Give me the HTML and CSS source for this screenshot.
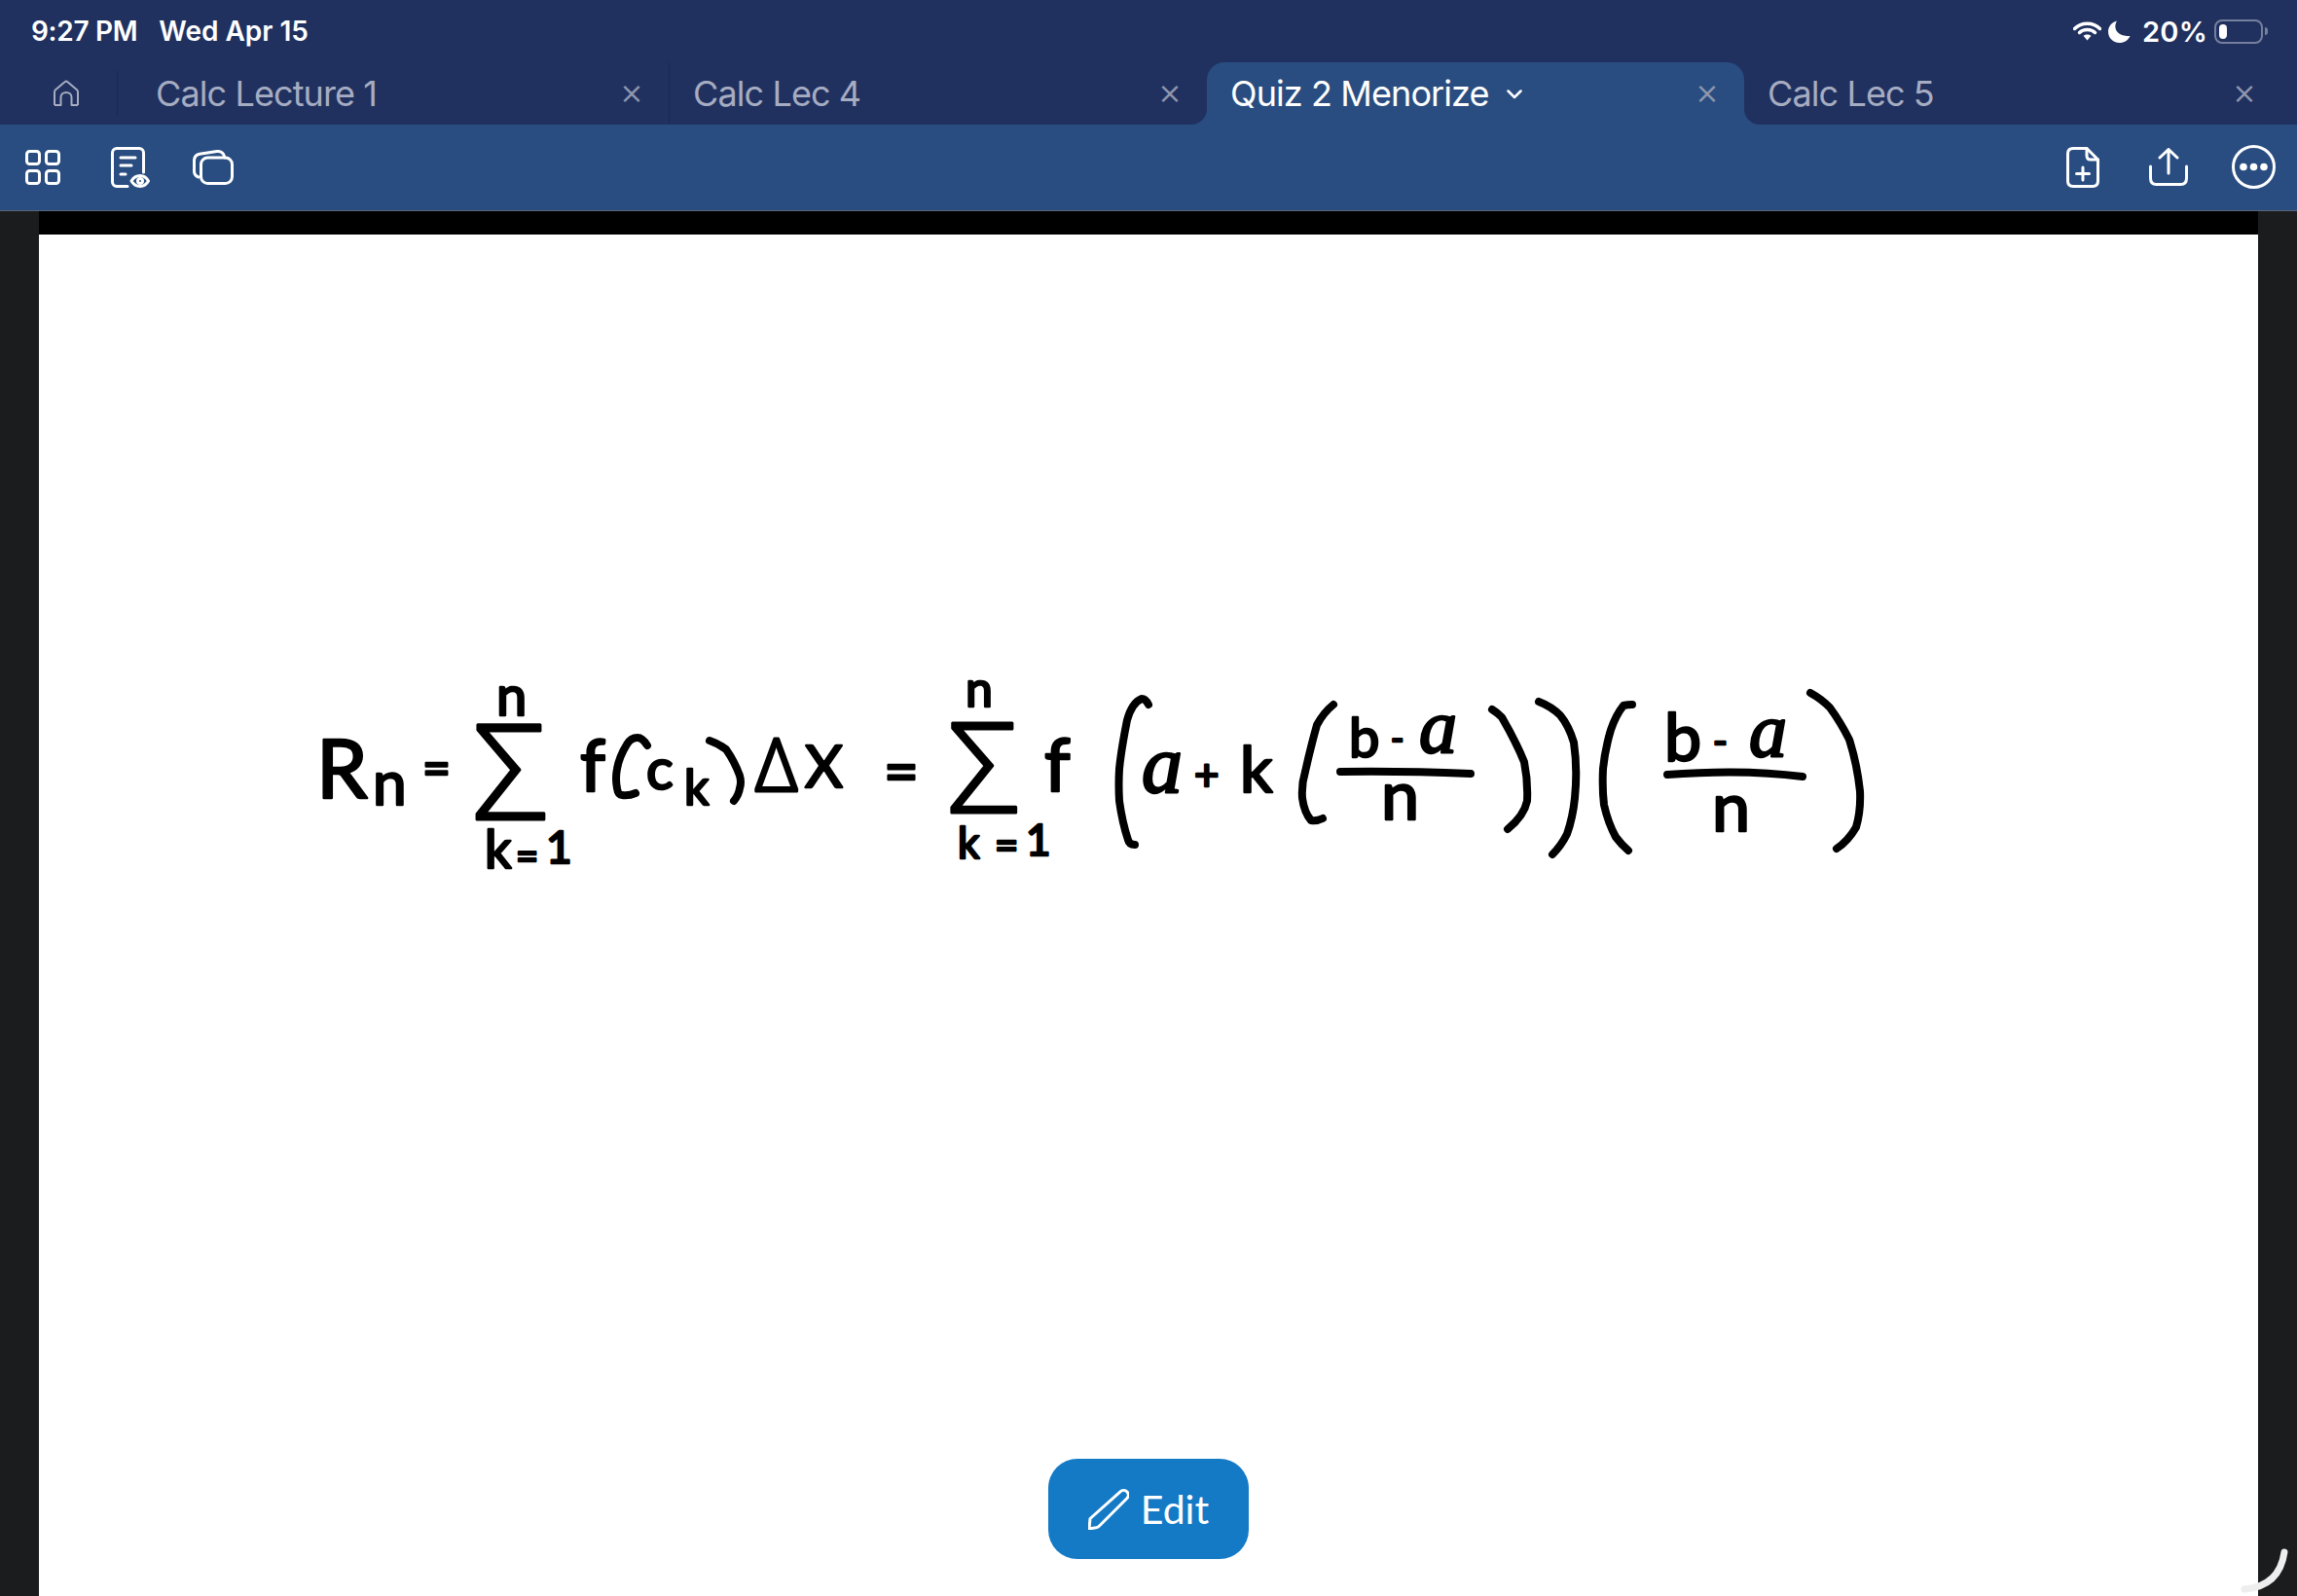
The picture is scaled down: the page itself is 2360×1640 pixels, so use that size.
FILE: index.html
```html
<!DOCTYPE html>
<html lang="en">
<head>
  <meta charset="UTF-8" />
  <meta name="viewport" content="width=device-width, initial-scale=1.0"/>
  <title>Quiz 2 Menorize</title>
  <link rel="stylesheet" href="styles.css">
</head>
<body>
  <div class="status-bar">
    <div class="status-left">
      <span class="status-time">9:27 PM</span>
      <span>Wed Apr 15</span>
    </div>
    <div class="status-right">
      <svg class="wifi" viewBox="0 0 29 20" width="29" height="20">
        <path d="M1.5 7.5C8.5 .5 20.5 .5 27.5 7.5" />
        <path d="M6.5 11.5C10.500 7.500 18.500 7.500 22.500 11.500" />
        <path class="wifi-dot" d="M10.500 14.800C12.800 12.900 16.200 12.900 18.500 14.800L14.500 19.500Z" />
      </svg>
      <svg class="moon" viewBox="0 0 23 23" width="23" height="23">
        <path d="M9 .5C5 7 8 16.500 22.500 16C20.500 20.500 16.500 23 11.500 23C5 23 0 17.800 0 11.500C0 6.500 3.500 1.800 9 .5Z" />
      </svg>
      <span class="battery-text">20%</span>
      <div class="battery"><div class="battery-fill"></div></div>
      <div class="battery-nub"></div>
    </div>
  </div>

  <div class="tabs">
    <div class="tab-home">
      <svg viewBox="0 0 28 28" width="28" height="28" class="icon-muted">
        <path d="M2 26V12.500C2 11.500 2.400 10.800 3 10.200L12.500 2.200C13.400 1.400 14.600 1.400 15.500 2.200L25 10.200C25.600 10.800 26 11.500 26 12.500V26" />
        <path d="M2 26H8.500V18C8.500 15 11 13 14 13C17 13 19.500 15 19.500 18V26H26" />
      </svg>
    </div>
    <div class="tab">
      <span class="tab-title">Calc Lecture 1</span>
      <span class="tab-close">×</span>
    </div>
    <div class="tab">
      <span class="tab-title">Calc Lec 4</span>
      <span class="tab-close">×</span>
    </div>
    <div class="tab active">
      <span class="tab-title">Quiz 2 Menorize</span>
      <svg class="chevron" viewBox="0 0 16 10" width="16" height="10"><path d="M1.500 1.500L8 8L14.500 1.500" /></svg>
      <span class="tab-close">×</span>
    </div>
    <div class="tab">
      <span class="tab-title">Calc Lec 5</span>
      <span class="tab-close">×</span>
    </div>
  </div>

  <div class="toolbar">
    <div class="toolbar-group">
      <svg class="icon" viewBox="0 0 36 36" width="36" height="36">
        <rect x="1.500" y="1.500" width="13" height="13" rx="3" />
        <rect x="21.500" y="1.500" width="13" height="13" rx="3" />
        <rect x="1.500" y="21.500" width="13" height="13" rx="3" />
        <rect x="21.500" y="21.500" width="13" height="13" rx="3" />
      </svg>
      <svg class="icon" viewBox="0 0 40 42" width="40" height="42">
        <path d="M17 40.500H6C3.500 40.500 1.500 38.500 1.500 36V6C1.500 3.500 3.500 1.500 6 1.500H29C31.500 1.500 33.500 3.500 33.500 6V26" />
        <path d="M10 11H25M10 19H21M10 28H15" />
        <path d="M21 35C23 31.500 26 29.500 30 29.500C34 29.500 36.500 31.500 38.500 35C36.500 38.500 34 40.500 30 40.500C26 40.500 23 38.500 21 35Z" />
        <circle cx="30" cy="35" r="2.500" />
      </svg>
      <svg class="icon" viewBox="0 0 42 36" width="42" height="36">
        <rect x="8.500" y="8" width="32" height="26.500" rx="7" />
        <path d="M6 28C3 27 1.800 25 1.500 22.500L1.500 11C1.500 7.500 3.500 5 7 4.200L25 1.500C29 1.200 32 3.500 33 8" />
      </svg>
    </div>
    <div class="toolbar-group toolbar-right">
      <svg class="icon" viewBox="0 0 34 42" width="34" height="42">
        <path d="M21 1.500H7C3.500 1.500 1.500 3.500 1.500 7V35C1.500 38.500 3.500 40.500 7 40.500H27C30.500 40.500 32.500 38.500 32.500 35V13Z" />
        <path d="M21 1.500V9C21 11.500 22.500 13 25 13H32.500" />
        <path d="M17 21V34M10.500 27.500H23.500" />
      </svg>
      <svg class="icon" viewBox="0 0 40 39" width="40" height="39">
        <path d="M20 26V2M11 10L20 1.500L29 10" />
        <path d="M1.500 19V31C1.500 35 3.500 37.500 7.500 37.500H32.500C36.500 37.500 38.500 35 38.500 31V19" />
      </svg>
      <svg class="icon" viewBox="0 0 45 45" width="45" height="45">
        <circle cx="22.500" cy="22.500" r="21" />
        <circle class="icon-dot" cx="12" cy="22.500" r="3.800" />
        <circle class="icon-dot" cx="22.500" cy="22.500" r="3.800" />
        <circle class="icon-dot" cx="33" cy="22.500" r="3.800" />
      </svg>
    </div>
  </div>

  <div class="viewer">
    <div class="sheet">
      <div class="sheet-top"></div>
      <div class="page">
        <svg class="ink" viewBox="40 241 2280 1399" width="2280" height="1399">
          <text class="hand" x="325" y="820" font-size="84">R</text>
          <text class="hand" x="383" y="827" font-size="62">n</text>
          <text class="hand" x="434" y="807" font-size="50">=</text>
          <text class="hand" x="510" y="735" font-size="56">n</text>
          <text class="hand sym" x="486" y="842" font-size="136">Σ</text>
          <text class="hand" x="498" y="892" font-size="54">k</text>
          <text class="hand" x="530" y="894" font-size="40">=</text>
          <text class="hand" x="561" y="887" font-size="46">1</text>
          <text class="hand" x="596" y="813" font-size="74">f</text>
          <text class="hand" x="664" y="811" font-size="58">c</text>
          <text class="hand" x="703" y="827" font-size="50">k</text>
          <text class="hand sym" x="776" y="813" font-size="76">Δ</text>
          <text class="hand" x="827" y="809" font-size="60">X</text>
          <text class="hand" x="908" y="815" font-size="62">=</text>

          <text class="hand" x="992" y="726" font-size="50">n</text>
          <text class="hand sym" x="974" y="835" font-size="130">Σ</text>
          <text class="hand" x="984" y="882" font-size="44">k</text>
          <text class="hand" x="1022" y="883" font-size="42">=</text>
          <text class="hand" x="1054" y="879" font-size="44">1</text>
          <text class="hand" x="1073" y="813" font-size="76">f</text>
          <text class="hand curl" x="1173" y="814" font-size="84">a</text>
          <text class="hand" x="1227" y="812" font-size="44">+</text>
          <text class="hand" x="1274" y="814" font-size="66">k</text>
          <text class="hand" x="1386" y="778" font-size="56">b</text>
          <text class="hand" x="1429" y="772" font-size="36">-</text>
          <text class="hand curl" x="1458" y="773" font-size="78">a</text>
          <text class="hand" x="1419" y="842" font-size="70">n</text>

          <text class="hand" x="1710" y="782" font-size="68">b</text>
          <text class="hand" x="1760" y="776" font-size="40">-</text>
          <text class="hand curl" x="1797" y="777" font-size="78">a</text>
          <text class="hand" x="1759" y="854" font-size="70">n</text>

          <path class="stroke" d="M665 766Q660 758 655 758Q648 758 644 765Q636 778 634 790Q632 800 634 810Q635 817 639 817Q646 818 653 815" />
          <path class="stroke" d="M729 761Q738 764 746 770Q755 783 760 797Q762 804 760 810Q759 817 754 823" />
          <path class="stroke" d="M1180 724Q1177 718 1173 718Q1163 722 1158 740Q1152 770 1150 790Q1149 806 1150 823Q1153 845 1159 863Q1160 868 1166 868" />
          <path class="stroke" d="M1370 724Q1360 732 1353 745Q1346 770 1341 793Q1337 806 1338 820Q1340 835 1347 843Q1353 844 1359 841" />
          <path class="stroke" d="M1533 729Q1538 732 1543 737Q1558 763 1566 783Q1570 803 1569 823Q1566 838 1549 852" />
          <path class="stroke" d="M1581 721Q1594 726 1603 735Q1612 746 1617 763Q1621 790 1618 820Q1616 840 1610 857Q1604 869 1595 878" />
          <path class="stroke" d="M1677 724Q1672 724 1668 725Q1660 735 1655 750Q1649 770 1647 790Q1646 810 1648 827Q1652 845 1660 860Q1666 868 1673 874" />
          <path class="stroke" d="M1860 712Q1871 718 1880 727Q1891 742 1900 760Q1908 785 1911 813Q1912 833 1907 850Q1899 864 1887 872" />
          <path class="stroke" d="M1377 793Q1440 792 1511 795" />
          <path class="stroke" d="M1713 796Q1790 790 1852 798" />
        </svg>
        <button class="edit-btn">
          <svg viewBox="0 0 42 42" width="42" height="42"><path d="M1 41L2 30.500L33 2.800C35 1 38 1 40 3C41.800 5 41.800 7.500 40 9.500L11.500 38C10.500 39 9.500 39.500 8 39.800Z" /></svg>
          <span>Edit</span>
        </button>
      </div>
    </div>
    <svg class="scroll-arc" viewBox="0 0 60 60" width="60" height="60"><path d="M6 53Q42 50 47 15" /></svg>
  </div>
</body>
</html>
```

FILE: styles.css
```css
:root {
  --status-bg: #20315f;
  --toolbar-bg: #294d80;
  --muted: #a6acc1;
  --gutter: #1b1c1e;
}

* {
  margin: 0;
  padding: 0;
  box-sizing: border-box;
}

html, body {
  width: 2360px;
  height: 1640px;
  overflow: hidden;
}

body {
  font-family: Inter, 'Liberation Sans', sans-serif;
  background: var(--gutter);
  display: flex;
  flex-direction: column;
}

svg {
  display: block;
  flex-shrink: 0;
}

/* status bar */
.status-bar {
  height: 64px;
  padding: 0 30px 0 32px;
  background: var(--status-bg);
  color: #fff;
  font-size: 28px;
  font-weight: 600;
  display: flex;
  align-items: center;
  justify-content: space-between;
}

.status-left {
  display: flex;
  gap: 22px;
}

.status-time {
  letter-spacing: -0.3px;
}

.status-right {
  display: flex;
  align-items: center;
}

.wifi {
  fill: none;
  stroke: #fff;
  stroke-width: 3.5;
  stroke-linecap: round;
}

.wifi-dot {
  fill: #fff;
  stroke: none;
}

.moon {
  fill: #fff;
  margin-left: 7px;
}

.battery-text {
  margin-left: 12px;
  font-size: 29px;
  letter-spacing: 0.2px;
}

.battery {
  width: 50px;
  height: 25px;
  margin-left: 7px;
  padding: 3px;
  border: 2px solid #76809c;
  border-radius: 8px;
}

.battery-fill {
  width: 8px;
  height: 15px;
  background: #fff;
  border-radius: 4px;
}

.battery-nub {
  width: 3px;
  height: 8px;
  margin-left: 2px;
  background: #76809c;
  border-radius: 0 3px 3px 0;
}

/* tabs */
.tabs {
  height: 64px;
  background: var(--status-bg);
  display: flex;
}

.tab-home {
  width: 136px;
  padding-left: 54px;
  display: flex;
  align-items: center;
  position: relative;
}

.tab-home::after {
  content: "";
  position: absolute;
  left: 120px;
  top: 8px;
  bottom: 8px;
  width: 1px;
  background: #1a2953;
}

.icon-muted {
  fill: none;
  stroke: var(--muted);
  stroke-width: 2;
  stroke-linejoin: round;
}

.tab {
  width: 552px;
  padding: 0 24px;
  color: var(--muted);
  font-size: 36px;
  letter-spacing: -0.9px;
  display: flex;
  align-items: center;
  position: relative;
  border-right: 1px solid #1a2953;
}

.tab:last-child,
.tab:nth-child(3) {
  border-right: none;
}

.tab-title {
  white-space: nowrap;
}

.tab-close {
  position: absolute;
  right: 23px;
  top: 9px;
  width: 30px;
  color: #8f96ad;
  font-size: 38px;
  font-weight: 300;
  line-height: 40px;
  text-align: center;
  letter-spacing: 0;
}

.tab.active {
  background: var(--toolbar-bg);
  color: #fff;
  border-right: none;
  border-radius: 18px 18px 0 0;
}

.tab.active::before,
.tab.active::after {
  content: "";
  position: absolute;
  bottom: 0;
  width: 16px;
  height: 16px;
}

.tab.active::before {
  left: -16px;
  background: radial-gradient(circle at 0 0, transparent 15.5px, var(--toolbar-bg) 16.5px);
}

.tab.active::after {
  right: -16px;
  background: radial-gradient(circle at 100% 0, transparent 15.5px, var(--toolbar-bg) 16.5px);
}

.chevron {
  margin-left: 18px;
  margin-top: 2px;
  fill: none;
  stroke: #fff;
  stroke-width: 2.500;
  stroke-linecap: round;
  stroke-linejoin: round;
}

/* toolbar */
.toolbar {
  height: 89px;
  padding: 0 22px 1px 26px;
  background: var(--toolbar-bg);
  border-bottom: 1px solid #5c6579;
  display: flex;
  align-items: center;
  justify-content: space-between;
}

.toolbar-group {
  display: flex;
  align-items: center;
  gap: 44px;
}

.toolbar-group .icon:first-child {
  margin-right: 8px;
}

.toolbar-right {
  gap: 45px;
}

.toolbar-right .icon:first-child {
  margin-right: 6px;
}

.icon {
  fill: none;
  stroke: #fff;
  stroke-width: 3;
  stroke-linecap: round;
  stroke-linejoin: round;
}

.icon-dot {
  fill: #fff;
  stroke: none;
}

/* document */
.viewer {
  flex: 1;
  padding: 0 40px;
  position: relative;
}

.sheet {
  height: 100%;
  display: flex;
  flex-direction: column;
}

.sheet-top {
  height: 24px;
  background: #000;
}

.page {
  flex: 1;
  background: #fff;
  position: relative;
}

.ink {
  position: absolute;
  top: 0;
  left: 0;
}

.hand {
  font-family: Lato, sans-serif;
  fill: #000;
  stroke: #000;
  stroke-width: 2.500;
  stroke-linejoin: round;
}

.sym {
  font-family: 'Open Sans', sans-serif;
  font-weight: 300;
  stroke-width: 3;
}

.curl {
  font-family: 'Liberation Serif', serif;
  font-style: italic;
}

.stroke {
  fill: none;
  stroke: #000;
  stroke-width: 8;
  stroke-linecap: round;
  stroke-linejoin: round;
}

.edit-btn {
  position: absolute;
  left: 1037px;
  bottom: 38px;
  width: 206px;
  height: 103px;
  background: #147ac6;
  color: #fff;
  border: none;
  border-radius: 30px;
  font-family: Lato, sans-serif;
  font-size: 41px;
  display: flex;
  align-items: center;
  justify-content: center;
  gap: 12px;
}

.edit-btn svg {
  fill: none;
  stroke: #fff;
  stroke-width: 3;
  stroke-linejoin: round;
}

.scroll-arc {
  position: absolute;
  right: 0;
  bottom: 0;
  fill: none;
  stroke: #eeeeee;
  stroke-width: 7;
  stroke-linecap: round;
}
```
